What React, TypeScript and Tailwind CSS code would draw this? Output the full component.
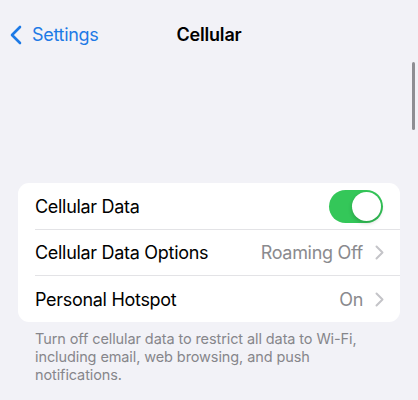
import React, { useState } from 'react';

const Chevron = () => (
  <svg width="9" height="15" viewBox="0 0 9 15" className="shrink-0">
    <path d="M1.5 1.5 L7.5 7.5 L1.5 13.5" fill="none" stroke="#c4c4c8" strokeWidth="2" strokeLinecap="round" strokeLinejoin="round" />
  </svg>
);

const App: React.FC = () => {
  const [cellularOn, setCellularOn] = useState(true);

  return (
    <div className="relative w-[418px] h-[400px] overflow-hidden bg-[#f2f2f7] font-['Inter','Liberation_Sans',sans-serif] text-black">
      {/* nav bar */}
      <div className="grid grid-cols-[1fr_auto_1fr] items-center h-[24px] mt-[23px] px-[10px]">
        <button className="flex items-center gap-[10px] text-[#1d7ae6]">
          <svg width="12" height="20" viewBox="0 0 12 20">
            <path d="M10 2 L2 10 L10 18" fill="none" stroke="currentColor" strokeWidth="2.6" strokeLinecap="round" strokeLinejoin="round" />
          </svg>
          <span className="text-[18px] leading-none tracking-[-0.3px]">Settings</span>
        </button>
        <h1 className="text-[18px] leading-none font-semibold tracking-[-0.2px]">Cellular</h1>
        <div />
      </div>

      {/* scroll indicator */}
      <div className="absolute left-[412px] top-[62px] w-[3px] h-[68px] rounded-full bg-[#8e8e93]" />

      {/* settings group */}
      <div className="mx-[18px] mt-[136px] bg-white rounded-[11px] overflow-hidden">
        <div className="flex items-center justify-between h-[46px] pl-[17px] pr-[17px]">
          <span className="text-[18px] tracking-[-0.3px]">Cellular Data</span>
          <button
            onClick={() => setCellularOn(!cellularOn)}
            className={`relative w-[54px] h-[33px] rounded-full ${cellularOn ? 'bg-[#34c759]' : 'bg-[#e9e9eb]'}`}
          >
            <span
              className={`absolute top-[2px] w-[29px] h-[29px] rounded-full bg-white shadow-[0_2px_4px_rgba(0,0,0,0.2)] ${cellularOn ? 'left-[23px]' : 'left-[2px]'}`}
            />
          </button>
        </div>
        <div className="ml-[17px] h-px bg-[#e3e3e6]" />
        <div className="flex items-center justify-between h-[45px] pl-[17px] pr-[16px]">
          <span className="text-[18px] tracking-[-0.3px]">Cellular Data Options</span>
          <div className="flex items-center gap-[12px]">
            <span className="text-[18px] tracking-[-0.3px] text-[#8a8a8e]">Roaming Off</span>
            <Chevron />
          </div>
        </div>
        <div className="ml-[17px] h-px bg-[#e3e3e6]" />
        <div className="flex items-center justify-between h-[46px] pl-[17px] pr-[16px]">
          <span className="text-[18px] tracking-[-0.3px]">Personal Hotspot</span>
          <div className="flex items-center gap-[12px]">
            <span className="text-[18px] tracking-[-0.3px] text-[#8a8a8e]">On</span>
            <Chevron />
          </div>
        </div>
      </div>

      <p className="mt-[8px] px-[35px] text-[14.5px] leading-[18px] text-[#86868b] tracking-[-0.1px]">
        Turn off cellular data to restrict all data to Wi-Fi, including email, web browsing, and push notifications.
      </p>
    </div>
  );
};

export default App;
